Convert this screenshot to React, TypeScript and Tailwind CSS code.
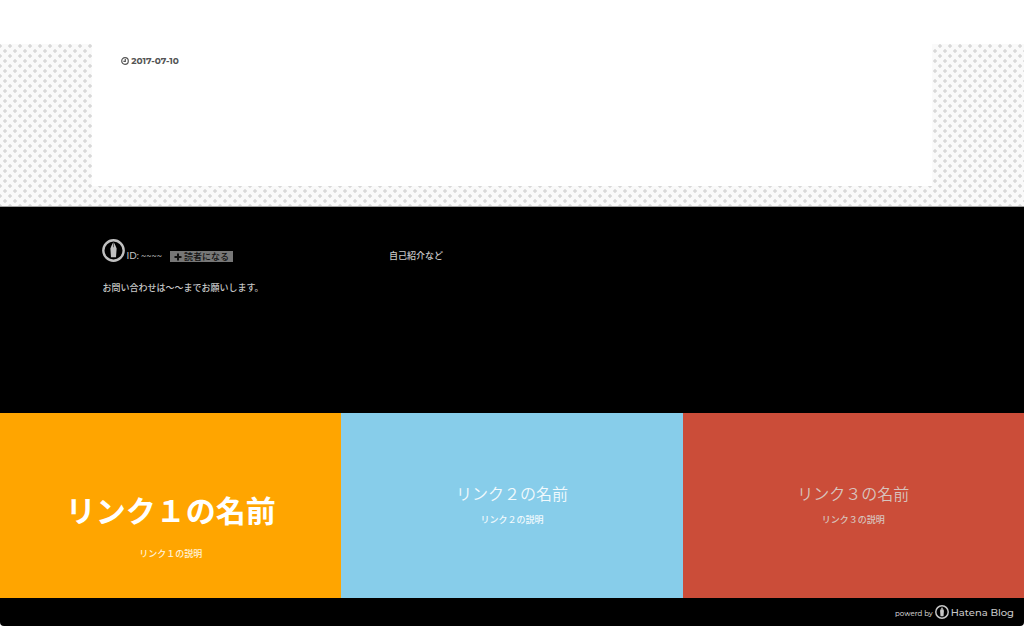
import type { ReactNode } from "react";

function PenMark({ className }: { className: string }) {
  return (
    <svg viewBox="0 0 44 44" className={`shrink-0 ${className}`} aria-hidden="true">
      <circle cx="22" cy="22" r="19.500" fill="none" stroke="currentColor" strokeWidth="4.600" />
      <path fill="currentColor" d="M21.500 6v10h1V6C24.500 10 26.500 13.500 28 18l-1.200 17H17.200L16 18c1.500-4.500 3.500-8 5.500-12Z" />
    </svg>
  );
}

function ClockIcon() {
  return (
    <svg viewBox="0 0 16 16" className="size-2 shrink-0" fill="none" stroke="currentColor" strokeWidth="2.400" aria-hidden="true">
      <circle cx="8" cy="8" r="6.600" />
      <path d="M8.600 3.800v5H4.800" />
    </svg>
  );
}

function LinkTile({ className, children, note }: { className: string; children: ReactNode; note: string }) {
  return (
    <a href="#" className={`flex flex-col items-center text-center ${className}`}>
      {children}
      <p className="text-[9px] leading-3 font-medium">{note}</p>
    </a>
  );
}

export default function App() {
  return (
    <div className="bg-white font-['Montserrat','Noto_Sans_CJK_JP',sans-serif]">
      <div className="h-11" />
      <main className="border-b border-[#a0a0a0] bg-[#fafafa] bg-[radial-gradient(circle_at_center,#d8d8d8_1.4px,transparent_2.1px),radial-gradient(circle_at_center,#d8d8d8_1.4px,transparent_2.1px)] bg-size-[10px_10px] bg-position-[5px_-3px,0px_2px] pb-5">
        <article className="mx-auto min-h-[142px] w-[82%] bg-white px-7 pt-[11px]">
          <time dateTime="2017-07-10" className="ml-px flex items-center gap-0.5 text-[9px] leading-3 font-bold text-[#555555]">
            <ClockIcon />
            2017-07-10
          </time>
        </article>
      </main>

      <div className="overflow-hidden rounded-b bg-black text-[#c8c8c8]">
        <section className="mx-auto grid min-h-[206px] w-4/5 grid-cols-[35%_65%] pt-8 text-[9px] font-medium">
          <div>
            <div className="flex items-end">
              <PenMark className="size-[23px] text-[#c0c0c0]" />
              <span className="ml-px leading-3">ID: ~~~~</span>
              <button type="button" className="ml-2 flex h-[11px] items-center gap-0.5 bg-[#777777] px-1 text-[#111111]">
                <svg viewBox="0 0 8 8" className="size-2" aria-hidden="true">
                  <path d="M3 .5h2V3h2.500v2H5v2.500H3V5H.5V3H3Z" fill="currentColor" />
                </svg>
                <span className="leading-none">読者になる</span>
              </button>
            </div>
            <p className="mt-5 leading-3">お問い合わせは〜〜までお願いします。</p>
          </div>
          <p className="pt-[11px] leading-3">自己紹介など</p>
        </section>

        <nav className="grid h-[185px] grid-cols-3">
          <LinkTile className="bg-[#ffa500] pt-[81px] text-[#fff3dc]" note="リンク１の説明">
            <h2 className="mb-[18px] text-[30px] leading-9 font-bold text-white">リンク１の名前</h2>
          </LinkTile>
          <LinkTile className="bg-[#87cdea] pt-[72px] text-[#f2fafd]" note="リンク２の説明">
            <h2 className="mb-[9px] text-base leading-5 font-[350]">リンク２の名前</h2>
          </LinkTile>
          <LinkTile className="bg-[#cb4d39] pt-[72px] text-[#d8c4be]" note="リンク３の説明">
            <h2 className="mb-[9px] text-base leading-5 font-[350]">リンク３の名前</h2>
          </LinkTile>
        </nav>

        <footer className="flex h-7 items-center justify-end pr-2.5">
          <span className="pt-1 text-[7px] leading-3 font-medium">powerd by</span>
          <a href="#" className="ml-0.5 flex items-center gap-0.5 text-[10px] leading-3 font-medium">
            <PenMark className="size-3.5" />
            <span className="pt-0.5">Hatena Blog</span>
          </a>
        </footer>
      </div>
    </div>
  );
}
